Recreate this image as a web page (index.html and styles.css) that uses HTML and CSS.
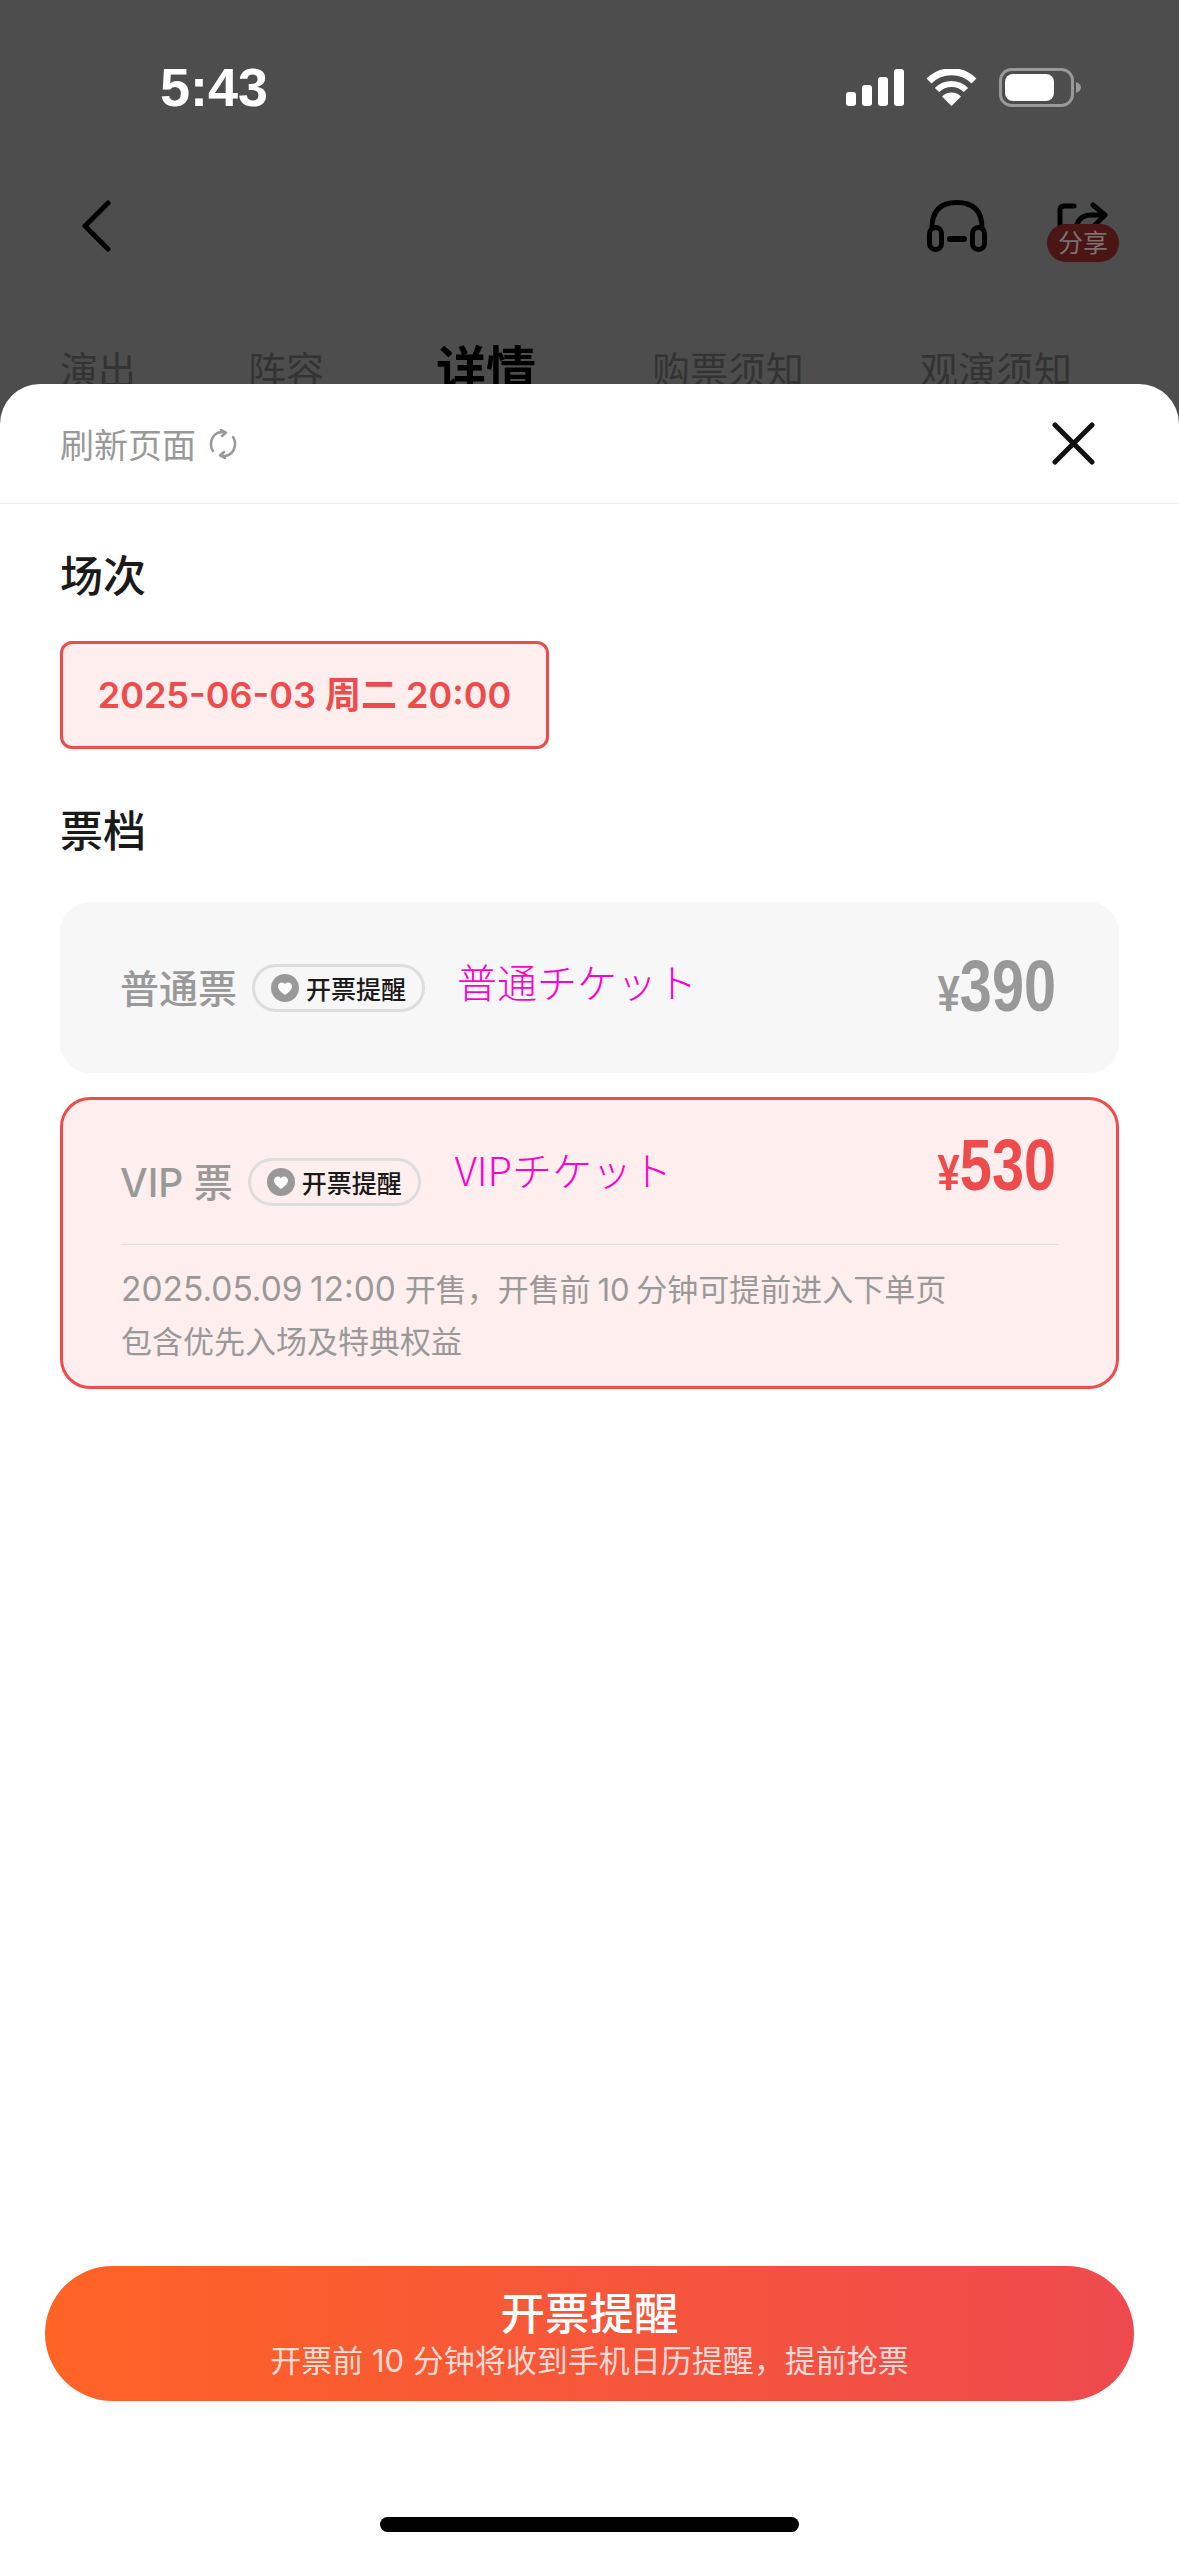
FILE: index.html
```html
<!DOCTYPE html>
<html lang="zh-CN">
<head>
  <meta charset="UTF-8" />
  <meta name="viewport" content="width=device-width, initial-scale=1.0"/>
  <title>开票提醒</title>
  <link rel="stylesheet" href="styles.css">
</head>
<body>
  <div class="top">
    <div class="status">
      <span class="time">5:43</span>
      <div class="status-icons">
        <svg width="58" height="37" viewBox="0 0 58 37" fill="#fff">
          <rect x="0" y="23" width="10" height="14" rx="3"/>
          <rect x="16" y="16" width="10" height="21" rx="3"/>
          <rect x="32" y="8" width="10" height="29" rx="3"/>
          <rect x="48" y="0" width="10" height="37" rx="3"/>
        </svg>
        <svg width="51" height="37" viewBox="0 0 51 37">
          <path d="M3 12A32 32 0 0 1 48 12" fill="none" stroke="#fff" stroke-width="7"/>
          <path d="M11 21A20.500 20.500 0 0 1 40 21" fill="none" stroke="#fff" stroke-width="6"/>
          <path d="M25.500 37L16 27.500A13.500 13.500 0 0 1 35 27.500Z" fill="#fff"/>
        </svg>
        <svg width="82" height="39" viewBox="0 0 82 39">
          <rect x="1.500" y="1.500" width="72" height="36" rx="11" fill="none" stroke="#999" stroke-width="3"/>
          <rect x="6" y="6" width="49" height="27" rx="8" fill="#fff"/>
          <path d="M77 14C80 15 82 17 82 19.500C82 22 80 24 77 25Z" fill="#999"/>
        </svg>
      </div>
    </div>

    <div class="nav">
      <svg width="32" height="52" viewBox="0 0 32 52" fill="none" stroke="#000" stroke-width="5" stroke-linecap="round" stroke-linejoin="round">
        <path d="M27 3L4 26L27 49"/>
      </svg>
      <div class="nav-right">
        <svg width="60" height="52" viewBox="0 0 60 52" fill="none" stroke="#000" stroke-linecap="round">
          <path d="M5 28C5 10 14 2.500 30 2.500C46 2.500 55 10 55 28" stroke-width="5"/>
          <rect x="2.500" y="27.500" width="12" height="22" rx="6" stroke-width="5"/>
          <rect x="45.500" y="27.500" width="12" height="22" rx="6" stroke-width="5"/>
          <path d="M23 39H37" stroke-width="6"/>
        </svg>
        <div class="share">
          <svg width="52" height="44" viewBox="0 0 52 44" fill="none" stroke="#000" stroke-width="5" stroke-linecap="round" stroke-linejoin="round">
            <path d="M3 28V8Q3 4 7 4H17"/>
            <path d="M36 3L48 13L38 23"/>
            <path d="M47 13H34Q20 13 18 30"/>
          </svg>
          <span class="share-badge">分享</span>
        </div>
      </div>
    </div>

    <div class="tabs">
      <span class="tab">演出</span>
      <span class="tab">阵容</span>
      <span class="tab tab-on">详情</span>
      <span class="tab">购票须知</span>
      <span class="tab">观演须知</span>
    </div>
  </div>

  <div class="sheet">
    <div class="sheet-head">
      <div class="refresh">
        <span>刷新页面</span>
        <svg width="30" height="30" viewBox="0 0 30 30" fill="none" stroke="#999" stroke-width="2.500" stroke-linecap="round" stroke-linejoin="round">
          <path d="M5 22C1 16 3 6 11 3.500C14 2.500 16 3 17 3.500"/>
          <path d="M13 1L18 3.500L14 7"/>
          <path d="M25 8C29 14 27 24 19 26.500C16 27.500 14 27 13 26.500"/>
          <path d="M17 29L12 26.500L16 23"/>
        </svg>
      </div>
      <svg width="43" height="43" viewBox="0 0 43 43" stroke="#111" stroke-width="5" stroke-linecap="round">
        <path d="M3 3L40 40M40 3L3 40"/>
      </svg>
    </div>

    <div class="content">
      <h2 class="title">场次</h2>
      <div class="session">2025-06-03 周二 20:00</div>

      <h2 class="title title-tickets">票档</h2>

      <div class="card">
        <div class="row">
          <div class="name-group">
            <span class="name">普通票</span>
            <span class="remind">
              <svg width="28" height="28" viewBox="0 0 28 28">
                <circle cx="14" cy="14" r="14" fill="#999"/>
                <path d="M14 21C9 17.500 7 15 7 12.500C7 10 9 8.500 11 8.500C12.300 8.500 13.300 9.200 14 10.200C14.700 9.200 15.700 8.500 17 8.500C19 8.500 21 10 21 12.500C21 15 19 17.500 14 21Z" fill="#fff"/>
              </svg>
              开票提醒
            </span>
            <span class="note">普通チケット</span>
          </div>
          <div class="price"><span class="yen">¥</span>390</div>
        </div>
      </div>

      <div class="card card-on">
        <div class="row row-vip">
          <div class="name-group">
            <span class="name">VIP 票</span>
            <span class="remind">
              <svg width="28" height="28" viewBox="0 0 28 28">
                <circle cx="14" cy="14" r="14" fill="#999"/>
                <path d="M14 21C9 17.500 7 15 7 12.500C7 10 9 8.500 11 8.500C12.300 8.500 13.300 9.200 14 10.200C14.700 9.200 15.700 8.500 17 8.500C19 8.500 21 10 21 12.500C21 15 19 17.500 14 21Z" fill="#fff"/>
              </svg>
              开票提醒
            </span>
            <span class="note note-vip">VIPチケット</span>
          </div>
          <div class="price price-on"><span class="yen">¥</span>530</div>
        </div>
        <div class="desc">
          <p><span class="date">2025.05.09 12:00</span> 开售，开售前 10 分钟可提前进入下单页</p>
          <p>包含优先入场及特典权益</p>
        </div>
      </div>
    </div>

    <div class="foot">
      <button class="remind-btn">
        <span class="btn-main">开票提醒</span>
        <span class="btn-sub">开票前 10 分钟将收到手机日历提醒，提前抢票</span>
      </button>
      <div class="home-bar"></div>
    </div>
  </div>
</body>
</html>
```

FILE: styles.css
```css
* {
  box-sizing: border-box;
}
body {
  margin: 0;
  width: 1179px;
  height: 2556px;
  overflow: hidden;
  display: flex;
  flex-direction: column;
  background: #4d4d4d;
  font-family: Inter, "Noto Sans CJK SC", sans-serif;
}
.top {
  height: 384px;
  overflow: hidden;
}
.status {
  height: 200px;
  padding: 60px 98px 0 160px;
  display: flex;
  justify-content: space-between;
  align-items: flex-start;
}
.time {
  color: #fff;
  font-family: "Liberation Sans", sans-serif;
  font-size: 54px;
  font-weight: 700;
  line-height: 54px;
}
.status-icons {
  display: flex;
  align-items: center;
  gap: 22px;
  margin-top: 8px;
}
.nav {
  height: 60px;
  padding: 0 70px 0 81px;
  display: flex;
  justify-content: space-between;
  align-items: flex-start;
}
.nav-right {
  display: flex;
  gap: 70px;
}
.share {
  position: relative;
  width: 52px;
  height: 44px;
  margin-top: 2px;
}
.share-badge {
  position: absolute;
  left: -10px;
  top: 22px;
  width: 72px;
  height: 38px;
  border-radius: 19px;
  background: #4a1515;
  color: #7d7070;
  font-size: 25px;
  line-height: 38px;
  text-align: center;
}
.tabs {
  display: flex;
  align-items: center;
  gap: 112px;
  padding: 80px 0 0 60px;
}
.tab {
  color: #333;
  font-size: 38px;
  line-height: 60px;
  white-space: nowrap;
}
.tab-on {
  margin-right: 4px;
  color: #000;
  font-size: 50px;
  font-weight: 700;
}
.tab:last-child {
  margin-left: 4px;
}
.sheet {
  flex: 1;
  display: flex;
  flex-direction: column;
  background: #fff;
  border-radius: 40px 40px 0 0;
}
.sheet-head {
  height: 120px;
  padding: 0 84px 0 60px;
  border-bottom: 1px solid #ececec;
  display: flex;
  justify-content: space-between;
  align-items: center;
}
.refresh {
  display: flex;
  align-items: center;
  gap: 12px;
  color: #999;
  font-size: 34px;
}
.content {
  padding: 42px 60px 0 60px;
}
.title {
  margin: 0;
  color: #1a1a1a;
  font-size: 43px;
  font-weight: 500;
  line-height: 60px;
}
.session {
  width: 489px;
  height: 108px;
  margin-top: 35px;
  border: 3px solid #ee4b4d;
  border-radius: 12px;
  background: #ffeeee;
  color: #ee4b4d;
  font-size: 36px;
  font-weight: 600;
  line-height: 102px;
  text-align: center;
  white-space: nowrap;
}
.title-tickets {
  margin-top: 52px;
}
.card {
  margin-top: 41px;
  border-radius: 30px;
  background: #f7f7f7;
}
.card-on {
  margin-top: 24px;
  padding-bottom: 18px;
  border: 3px solid #ee4b4d;
  background: #ffeeee;
}
.row {
  height: 171px;
  padding: 0 63px 0 60px;
  display: flex;
  justify-content: space-between;
  align-items: center;
}
.row-vip {
  height: 144px;
  padding: 0 60px 0 57px;
}
.name-group {
  display: flex;
  align-items: center;
  gap: 15px;
}
.row-vip .name-group {
  margin-top: 19px;
}
.name {
  margin-bottom: 3px;
  color: #999;
  font-size: 39px;
  font-weight: 500;
  white-space: nowrap;
}
.remind {
  height: 48px;
  padding: 0 16px;
  border: 3px solid #ddd;
  border-radius: 24px;
  display: flex;
  align-items: center;
  gap: 7px;
  color: #1a1a1a;
  font-size: 25px;
  font-weight: 500;
  white-space: nowrap;
}
.note {
  margin: 0 0 14px 17px;
  color: #ff00cc;
  font-family: "Noto Sans CJK JP", sans-serif;
  font-size: 40px;
  font-weight: 300;
  white-space: nowrap;
}
.note-vip {
  margin: 0 0 26px 19px;
}
/* no condensed face installed, the price digits are squeezed */
.price {
  margin-bottom: -4px;
  color: #999;
  font-family: "Liberation Sans", sans-serif;
  font-size: 72px;
  font-weight: 700;
  line-height: 80px;
  white-space: nowrap;
  transform: scaleX(0.8);
  transform-origin: right center;
}
.row-vip .price {
  margin-bottom: 6px;
}
.price-on {
  color: #ee4b4d;
}
.yen {
  font-size: 50px;
}
.desc {
  margin: 0 58px;
  padding-top: 18px;
  border-top: 1px solid #ddd;
  color: #999;
  font-size: 31px;
  word-spacing: -2px;
}
.date {
  font-size: 33.500px;
  margin-right: 2px;
}
.desc p {
  margin: 0;
  line-height: 52px;
  white-space: nowrap;
}
.foot {
  margin-top: auto;
  padding: 0 45px 24px;
  display: flex;
  flex-direction: column;
  align-items: center;
}
.remind-btn {
  width: 100%;
  height: 135px;
  padding: 0;
  border: 0;
  border-radius: 68px;
  background: linear-gradient(90deg, #ff6325, #ee4a4e);
  display: flex;
  flex-direction: column;
  align-items: center;
  justify-content: center;
  font-family: inherit;
}
.btn-main {
  color: #fff;
  font-size: 44.500px;
  font-weight: 500;
  line-height: 54px;
}
.btn-sub {
  color: rgba(255, 255, 255, 0.8);
  font-size: 31px;
  line-height: 40px;
  white-space: nowrap;
}
.home-bar {
  width: 419px;
  height: 15px;
  margin-top: 116px;
  border-radius: 8px;
  background: #000;
}
```
